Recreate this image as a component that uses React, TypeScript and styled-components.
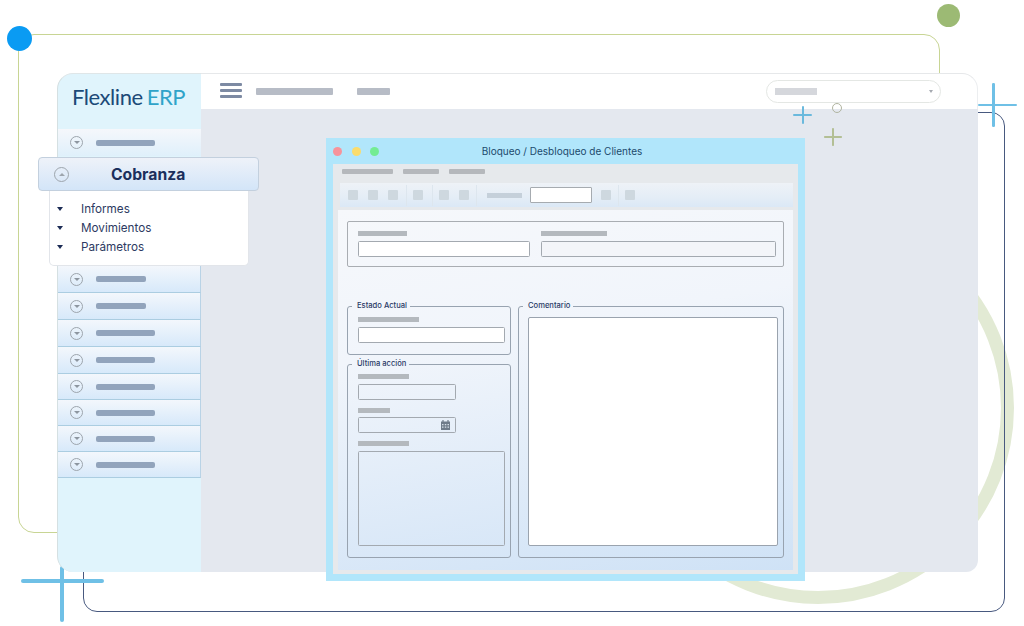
import React from 'react'
import styled, { createGlobalStyle } from 'styled-components'

const GlobalStyle = createGlobalStyle`
html, body {
  margin: 0;
  background: #fff;
  font-family: 'Inter', 'Liberation Sans', sans-serif;
}
* {
  box-sizing: border-box;
}
`

const Stage = styled.div`
  position: relative;
  width: 1024px;
  height: 626px;
  padding: 73px 46px 54px 57px;
  overflow: hidden;
  background: #fff;
`

/* decoration behind and over the app window */
const GreenFrame = styled.div`
  position: absolute;
  left: 18px;
  top: 34px;
  width: 922px;
  height: 499px;
  border: 1.5px solid #c8d594;
  border-radius: 16px;
`

const Ring = styled.div`
  position: absolute;
  left: 622px;
  top: 212px;
  width: 392px;
  height: 392px;
  border: 13px solid #e2ead4;
  border-radius: 50%;
`

const NavyFrame = styled.div`
  position: absolute;
  left: 83px;
  top: 112px;
  width: 921.5px;
  height: 499.5px;
  border: 1.5px solid #48597f;
  border-radius: 14px;
`

const Dot = styled.div<{ $x: number; $y: number; $size: number; $color: string; $hollow?: boolean }>`
  position: absolute;
  left: ${(p) => p.$x - p.$size / 2}px;
  top: ${(p) => p.$y - p.$size / 2}px;
  width: ${(p) => p.$size}px;
  height: ${(p) => p.$size}px;
  border-radius: 50%;
  background: ${(p) => (p.$hollow ? 'transparent' : p.$color)};
  border: ${(p) => (p.$hollow ? `1px solid ${p.$color}` : 'none')};
  z-index: ${(p) => (p.$hollow ? 3 : 0)};
`

// $x / $y are where the two strokes meet, $l $r $u $d how far each arm runs from there
const Cross = styled.div<{ $x: number; $y: number; $l: number; $r: number; $u: number; $d: number; $t: number; $color: string; $front?: boolean }>`
  position: absolute;
  left: ${(p) => p.$x - p.$l}px;
  top: ${(p) => p.$y - p.$u}px;
  width: ${(p) => p.$l + p.$r}px;
  height: ${(p) => p.$u + p.$d}px;
  z-index: ${(p) => (p.$front ? 3 : 0)};
  &::before, &::after {
    content: '';
    position: absolute;
    background: ${(p) => p.$color};
    border-radius: ${(p) => p.$t / 2}px;
  }
  &::before {
    left: 0;
    right: 0;
    top: ${(p) => p.$u - p.$t / 2}px;
    height: ${(p) => p.$t}px;
  }
  &::after {
    top: 0;
    bottom: 0;
    left: ${(p) => p.$l - p.$t / 2}px;
    width: ${(p) => p.$t}px;
  }
`

/* app window */
const AppWindow = styled.div`
  position: relative;
  z-index: 1;
  display: flex;
  width: 921px;
  height: 499px;
`

const Sidebar = styled.aside`
  display: flex;
  flex-direction: column;
  width: 144px;
  flex: none;
  background: #e0f4fc;
  border-radius: 16px 0 0 16px;
  border-left: 1px solid #d5e0e2;
  border-top: 1px solid #dfe6e8;
  position: relative;
  z-index: 2;
`

const LogoBox = styled.div`
  display: flex;
  align-items: center;
  gap: 4px;
  height: 55px;
  padding: 0 0 10px 14px;
  font-family: 'Lato', sans-serif;
  font-size: 22px;
  letter-spacing: -0.45px;
  line-height: 1;
  flex: none;
`

const LogoDark = styled.span`
  color: #1c4a78;
`

const LogoLight = styled.span`
  color: #2fa3c9;
`

const Row = styled.div<{ $h: number; $open?: boolean }>`
  display: flex;
  align-items: center;
  gap: 13px;
  height: ${(p) => p.$h}px;
  padding-left: 12px;
  background: ${(p) => (p.$open ? 'linear-gradient(#f5f7fb, #dff0fb)' : 'linear-gradient(#f3f7fc, #d7e9fa)')};
  border-right: ${(p) => (p.$open ? 'none' : '1px solid #b9d3e6')};
  border-bottom: ${(p) => (p.$open ? 'none' : '1px solid #abcde1')};
  flex: none;
`

const Chevron = styled.span<{ $up?: boolean; $large?: boolean }>`
  display: flex;
  align-items: center;
  justify-content: center;
  flex: none;
  width: ${(p) => (p.$large ? 15 : 13)}px;
  height: ${(p) => (p.$large ? 15 : 13)}px;
  border: 1px solid #9da5ad;
  border-radius: 50%;
  &::after {
    content: '';
    border-left: 3px solid transparent;
    border-right: 3px solid transparent;
    ${(p) => (p.$up ? 'border-bottom: 3px solid #9da5ad;' : 'border-top: 3px solid #8d96a0;')}
  }
`

const RowBar = styled.span<{ $w: number }>`
  width: ${(p) => p.$w}px;
  height: 6px;
  border-radius: 2px;
  background: #92a4bc;
`

const Flyout = styled.div`
  display: flex;
  flex-direction: column;
  flex: none;
  margin: 1px 0 0 -20px;
  width: 221px;
  height: 109px;
`

const FlyoutHead = styled.div`
  display: flex;
  align-items: center;
  height: 34px;
  padding-left: 15px;
  background: linear-gradient(#eef2f9, #d3e5f8);
  border: 1px solid #c3d0de;
  border-radius: 4px;
  flex: none;
`

const FlyoutTitle = styled.span`
  margin-left: 42px;
  font-size: 15.7px;
  font-weight: 700;
  color: #1b2f5c;
`

const FlyoutBody = styled.ul`
  display: flex;
  flex-direction: column;
  gap: 4px;
  width: 200px;
  height: 75px;
  margin: 0 0 0 11px;
  padding: 10.5px 0 0 7px;
  list-style: none;
  background: #fff;
  border: 1px solid #e2e5ea;
  border-top: none;
  border-radius: 0 0 5px 5px;
`

const FlyoutItem = styled.li`
  display: flex;
  align-items: center;
  gap: 18px;
  height: 15px;
  font-size: 11.7px;
  color: #2d3a62;
  &::before {
    content: '';
    border-left: 3px solid transparent;
    border-right: 3px solid transparent;
    border-top: 4px solid #1c2c55;
  }
`

const Main = styled.main`
  display: flex;
  flex-direction: column;
  flex: 1;
  min-width: 0;
`

const TopBar = styled.header`
  display: flex;
  align-items: center;
  height: 36px;
  padding: 0 36px 0 19px;
  background: #fff;
  border-top: 1px solid #e6e8ea;
  border-right: 1px solid #eceef0;
  border-radius: 0 16px 0 0;
  flex: none;
`

const Burger = styled.span`
  display: flex;
  flex-direction: column;
  gap: 3.5px;
  width: 22px;
  margin-top: -2px;
  flex: none;
  &::before, &::after, & > i {
    content: '';
    display: block;
    height: 2.5px;
    background: #7d8aa3;
    border-radius: 1px;
  }
`

const TopBarText = styled.span<{ $w: number; $gap: number }>`
  width: ${(p) => p.$w}px;
  height: 7px;
  margin-left: ${(p) => p.$gap}px;
  margin-top: -1px;
  background: #b7bcc6;
  border-radius: 1px;
  flex: none;
`

const SelectPill = styled.div`
  display: flex;
  align-items: center;
  justify-content: space-between;
  width: 175px;
  height: 23px;
  margin-left: auto;
  padding: 0 7px 0 8px;
  border: 1px solid #e4e7e4;
  border-radius: 12px;
  background: #fff;
  &::after {
    content: '';
    border-left: 2.5px solid transparent;
    border-right: 2.5px solid transparent;
    border-top: 3px solid #a5a9b0;
  }
`

const SelectValue = styled.span`
  width: 42px;
  height: 7px;
  background: #d5d7dc;
`

const Workspace = styled.div`
  flex: 1;
  min-height: 0;
  padding: 29px 0 0 125px;
  background: #e4e8ef;
  border-radius: 0 0 12px 0;
`

/* dialog */
const Dialog = styled.section`
  display: flex;
  flex-direction: column;
  width: 479px;
  height: 443px;
  padding: 0 7px 7px;
  background: #b1e6fb;
`

const TitleBar = styled.div`
  display: flex;
  align-items: center;
  height: 26px;
  flex: none;
`

const TrafficLights = styled.div`
  display: flex;
  gap: 9.5px;
  flex: none;
`

const Light = styled.span<{ $color: string }>`
  width: 9px;
  height: 9px;
  border-radius: 50%;
  background: ${(p) => p.$color};
`

const Title = styled.h1`
  flex: 1;
  margin: 0;
  padding-right: 53px;
  text-align: center;
  font-size: 10px;
  font-weight: 400;
  color: #1c4a6c;
`

const DialogBody = styled.div`
  display: flex;
  flex-direction: column;
  flex: 1;
  min-height: 0;
  padding: 0 5px 4px;
  background: #e6e9ec;
`

const MenuBar = styled.div`
  display: flex;
  align-items: center;
  gap: 10px;
  height: 18px;
  padding: 0 0 4px 9px;
  margin: 0 -5px;
  flex: none;
`

const MenuItem = styled.span<{ $w: number }>`
  width: ${(p) => p.$w}px;
  height: 5px;
  background: #b5b8bc;
  border-radius: 1px;
`

const Toolbar = styled.div`
  display: flex;
  align-items: center;
  height: 24px;
  margin: 1px 0 0 2px;
  padding-left: 8px;
  background: linear-gradient(#eef2f7 0%, #e4edf6 60%, #dbe8f6 100%);
  flex: none;
`

const ToolGroup = styled.div<{ $sep?: boolean; $right: number }>`
  display: flex;
  align-items: center;
  gap: 10px;
  height: 21px;
  padding-right: ${(p) => p.$right}px;
  margin-right: 6px;
  border-right: ${(p) => (p.$sep ? '1px solid #dde6ee' : 'none')};
`

const ToolIcon = styled.span`
  width: 10px;
  height: 10px;
  background: #ced8df;
  border-radius: 1px;
`

const ToolLabel = styled.span`
  width: 35px;
  height: 5px;
  margin-left: 4px;
  background: #c5d0da;
`

const ToolInput = styled.span`
  width: 62px;
  height: 16px;
  margin: 0 3px 0 -2px;
  background: #fff;
  border: 1px solid #a6abb0;
  border-radius: 1px;
`

const Content = styled.div`
  display: flex;
  flex-direction: column;
  gap: 34px;
  flex: 1;
  min-height: 0;
  margin-top: 3px;
  padding: 11px 9px 12px;
  background: linear-gradient(170deg, #f6f8fb 0%, #f1f5fb 35%, #cfe2f6 100%);
`

const TopGroup = styled.div`
  display: grid;
  grid-template-columns: 172px 235px;
  gap: 11px;
  height: 46px;
  padding: 9px 8px 0 10px;
  border: 1px solid #a9adb2;
  border-radius: 2px;
  flex: none;
`

const Field = styled.div`
  display: flex;
  flex-direction: column;
  gap: 5px;
`

const FieldLabel = styled.span<{ $w: number }>`
  width: ${(p) => p.$w}px;
  height: 5px;
  background: #b4b9be;
  flex: none;
`

const Input = styled.div<{ $w?: number; $bg?: string; $tall?: boolean }>`
  display: flex;
  align-items: center;
  justify-content: flex-end;
  width: ${(p) => (p.$w ? `${p.$w}px` : '100%')};
  height: ${(p) => (p.$tall ? '95px' : '16px')};
  padding-right: 5px;
  background: ${(p) => p.$bg || '#fff'};
  border: 1px solid #a3a9b0;
  border-radius: 1.5px;
  flex: none;
`

const Columns = styled.div`
  display: grid;
  grid-template-columns: 164px 266px;
  gap: 7px;
  flex: 1;
  min-height: 0;
`

const LeftColumn = styled.div`
  display: flex;
  flex-direction: column;
  gap: 4px;
`

const Fieldset = styled.fieldset<{ $h: number; $top: number }>`
  display: flex;
  flex-direction: column;
  margin: 0;
  height: ${(p) => p.$h}px;
  min-width: 0;
  padding: ${(p) => p.$top}px 5px 0 10px;
  border: 1px solid #98a3b0;
  border-radius: 3px;
`

const Legend = styled.legend`
  margin-left: -6px;
  padding: 0 3px 0 5px;
  font-size: 7.6px;
  line-height: 10px;
  font-weight: 500;
  color: #2a3a66;
`

const Stack = styled.div<{ $gap: number }>`
  display: flex;
  flex-direction: column;
  gap: ${(p) => p.$gap}px;
`

const CommentArea = styled.div`
  flex: 1;
  margin: 0 0 11px -1px;
  background: #fff;
  border: 1px solid #9aa3ae;
  border-radius: 2px;
`

const SidebarRows = [
  { w: 50, h: 27 },
  { w: 50, h: 27 },
  { w: 59, h: 27 },
  { w: 59, h: 27 },
  { w: 59, h: 26 },
  { w: 59, h: 26 },
  { w: 59, h: 26 },
  { w: 59, h: 26 },
]

const CalendarIcon: React.FC = () => (
  <svg width='9' height='10' viewBox='0 0 9 10'>
    <path d='M2 0v2M7 0v2' stroke='#6f7c8a' strokeWidth='1.2' />
    <path d='M0 1.5h9v8.5H0z' fill='#6f7c8a' />
    <path d='M1 4h1.5v1.2H1zM3.8 4h1.5v1.2H3.8zM6.5 4H8v1.2H6.5zM1 6.5h1.5v1.2H1zM3.8 6.5h1.5v1.2H3.8zM6.5 6.5H8v1.2H6.5z' fill='#d5dfe8' />
  </svg>
)

const App: React.FC = () => {
  return (
    <Stage>
      <GlobalStyle />
      <GreenFrame />
      <Ring />
      <NavyFrame />
      <Dot $x={19} $y={38} $size={25} $color='#0a9bf3' />
      <Dot $x={948} $y={15} $size={23} $color='#9cba74' />
      <Dot $x={837} $y={108} $size={10} $color='#b0b4a0' $hollow />
      <Cross $x={993.5} $y={105} $l={16} $r={23} $u={22} $d={22} $t={2.5} $color='#6fc0e6' />
      <Cross $x={62} $y={580.5} $l={41} $r={42} $u={15} $d={41} $t={4} $color='#6fc0e6' />
      <Cross $x={803} $y={115} $l={10} $r={9} $u={9} $d={9} $t={2} $color='#6ab9dd' $front />
      <Cross $x={833} $y={137} $l={9} $r={9} $u={9} $d={9} $t={1.5} $color='#b3bf95' $front />

      <AppWindow>
        <Sidebar>
          <LogoBox>
            <LogoDark>Flexline</LogoDark>
            <LogoLight>ERP</LogoLight>
          </LogoBox>
          <Row $h={27} $open>
            <Chevron />
            <RowBar $w={59} />
          </Row>
          <Flyout>
            <FlyoutHead>
              <Chevron $up $large />
              <FlyoutTitle>Cobranza</FlyoutTitle>
            </FlyoutHead>
            <FlyoutBody>
              <FlyoutItem>Informes</FlyoutItem>
              <FlyoutItem>Movimientos</FlyoutItem>
              <FlyoutItem>Parámetros</FlyoutItem>
            </FlyoutBody>
          </Flyout>
          {SidebarRows.map((row, i) => (
            <Row key={i} $h={row.h}>
              <Chevron />
              <RowBar $w={row.w} />
            </Row>
          ))}
        </Sidebar>

        <Main>
          <TopBar>
            <Burger><i /></Burger>
            <TopBarText $w={77} $gap={14} />
            <TopBarText $w={33} $gap={24} />
            <SelectPill>
              <SelectValue />
            </SelectPill>
          </TopBar>
          <Workspace>
            <Dialog>
              <TitleBar>
                <TrafficLights>
                  <Light $color='#f7939b' />
                  <Light $color='#fbdc6b' />
                  <Light $color='#74ec93' />
                </TrafficLights>
                <Title>Bloqueo / Desbloqueo de Clientes</Title>
              </TitleBar>
              <DialogBody>
                <MenuBar>
                  <MenuItem $w={51} />
                  <MenuItem $w={36} />
                  <MenuItem $w={36} />
                </MenuBar>
                <Toolbar>
                  <ToolGroup $sep $right={8}>
                    <ToolIcon />
                    <ToolIcon />
                    <ToolIcon />
                  </ToolGroup>
                  <ToolGroup $sep $right={9}>
                    <ToolIcon />
                  </ToolGroup>
                  <ToolGroup $sep $right={7}>
                    <ToolIcon />
                    <ToolIcon />
                  </ToolGroup>
                  <ToolGroup $right={0}>
                    <ToolLabel />
                    <ToolInput />
                  </ToolGroup>
                  <ToolGroup $sep $right={7}>
                    <ToolIcon />
                  </ToolGroup>
                  <ToolGroup $right={0}>
                    <ToolIcon />
                  </ToolGroup>
                </Toolbar>
                <Content>
                  <TopGroup>
                    <Field>
                      <FieldLabel $w={49} />
                      <Input />
                    </Field>
                    <Field>
                      <FieldLabel $w={66} />
                      <Input $bg='#f3f5f9' />
                    </Field>
                  </TopGroup>
                  <Columns>
                    <LeftColumn>
                      <Fieldset $h={54} $top={6}>
                        <Legend>Estado Actual</Legend>
                        <Stack $gap={5}>
                          <FieldLabel $w={61} />
                          <Input />
                        </Stack>
                      </Fieldset>
                      <Fieldset $h={199} $top={5}>
                        <Legend>Última acción</Legend>
                        <Stack $gap={8}>
                          <Stack $gap={5}>
                            <FieldLabel $w={51} />
                            <Input $w={98} $bg='transparent' />
                          </Stack>
                          <Stack $gap={4}>
                            <FieldLabel $w={32} />
                            <Input $w={98} $bg='transparent'>
                              <CalendarIcon />
                            </Input>
                          </Stack>
                          <Stack $gap={5}>
                            <FieldLabel $w={51} />
                            <Input $bg='transparent' $tall />
                          </Stack>
                        </Stack>
                      </Fieldset>
                    </LeftColumn>
                    <Fieldset $h={257} $top={6}>
                      <Legend>Comentario</Legend>
                      <CommentArea />
                    </Fieldset>
                  </Columns>
                </Content>
              </DialogBody>
            </Dialog>
          </Workspace>
        </Main>
      </AppWindow>
    </Stage>
  )
}

export default App
